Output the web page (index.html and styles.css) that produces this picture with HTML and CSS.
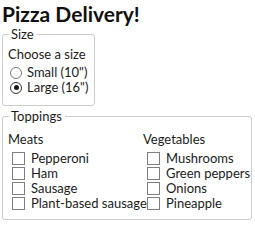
FILE: index.html
```html
<!DOCTYPE html>
<html>
<head>
<meta charset="utf-8">
<link rel="stylesheet" href="styles.css">
</head>
<body>
<h1 class="title">Pizza Delivery!</h1>
<fieldset class="group size-group">
  <legend class="legend">Size</legend>
  <div class="caption">Choose a size</div>
  <div class="radios">
    <label class="opt"><span class="radio"></span>Small (10")</label>
    <label class="opt"><span class="radio checked"></span>Large (16")</label>
  </div>
</fieldset>
<fieldset class="group toppings-group">
  <legend class="legend">Toppings</legend>
  <div class="cols">
    <div class="col">
      <div class="caption">Meats</div>
      <div class="checks">
        <label class="opt"><span class="box"></span>Pepperoni</label>
        <label class="opt"><span class="box"></span>Ham</label>
        <label class="opt"><span class="box"></span>Sausage</label>
        <label class="opt"><span class="box"></span>Plant-based sausage</label>
      </div>
    </div>
    <div class="col">
      <div class="caption">Vegetables</div>
      <div class="checks">
        <label class="opt"><span class="box"></span>Mushrooms</label>
        <label class="opt"><span class="box"></span>Green peppers</label>
        <label class="opt"><span class="box"></span>Onions</label>
        <label class="opt"><span class="box"></span>Pineapple</label>
      </div>
    </div>
  </div>
</fieldset>
</body>
</html>
```
FILE: styles.css
```css
html, body {
  margin: 0;
  background: #ffffff;
}
body {
  padding: 2px 0 0 2px;
  font-family: "Lato", "Open Sans", sans-serif;
  font-size: 13px;
  color: #1b1b1b;
  width: 253px;
}
.title {
  margin: 0;
  font-size: 21px;
  font-weight: 700;
  line-height: 23px;
  color: #111;
  white-space: nowrap;
}
.group {
  box-sizing: border-box;
  margin: 2px 0 0 0;
  padding: 5px 5px 0 5px;
  border: 1px solid #cdcdcd;
  border-radius: 3px;
  box-shadow: inset 1px 1px 0 #ffffff, 1px 1px 0 #ffffff;
  min-width: 0;
}
.size-group {
  width: 93px;
  height: 79px;
}
.toppings-group {
  margin-top: 3px;
  width: 250px;
  height: 111px;
  padding-top: 8px;
}
.legend {
  padding: 0 3px 0 2px;
  margin-left: 1px;
  line-height: 14px;
}
.caption {
  line-height: 16px;
  white-space: nowrap;
}
.radios {
  margin-top: 3px;
  padding-left: 2px;
  display: flex;
  flex-direction: column;
}
.checks {
  margin-top: 4px;
  padding-left: 4px;
  display: flex;
  flex-direction: column;
}
.opt {
  display: flex;
  align-items: center;
  line-height: 15px;
  white-space: nowrap;
}
.radio {
  flex: none;
  width: 12px;
  height: 12px;
  border: 1px solid #7a7a7a;
  border-radius: 50%;
  margin-right: 5px;
  box-sizing: border-box;
  position: relative;
  background: #fff;
}
.radio.checked {
  border-color: #333;
}
.radio.checked::after {
  content: "";
  position: absolute;
  left: 2.5px;
  top: 2.5px;
  width: 5px;
  height: 5px;
  border-radius: 50%;
  background: #1a1a1a;
}
.box {
  flex: none;
  width: 13px;
  height: 13px;
  border: 1px solid #7f7f7f;
  box-sizing: border-box;
  margin-right: 6px;
  background: #fff;
}
.cols {
  display: grid;
  grid-template-columns: 135px 1fr;
}
```
